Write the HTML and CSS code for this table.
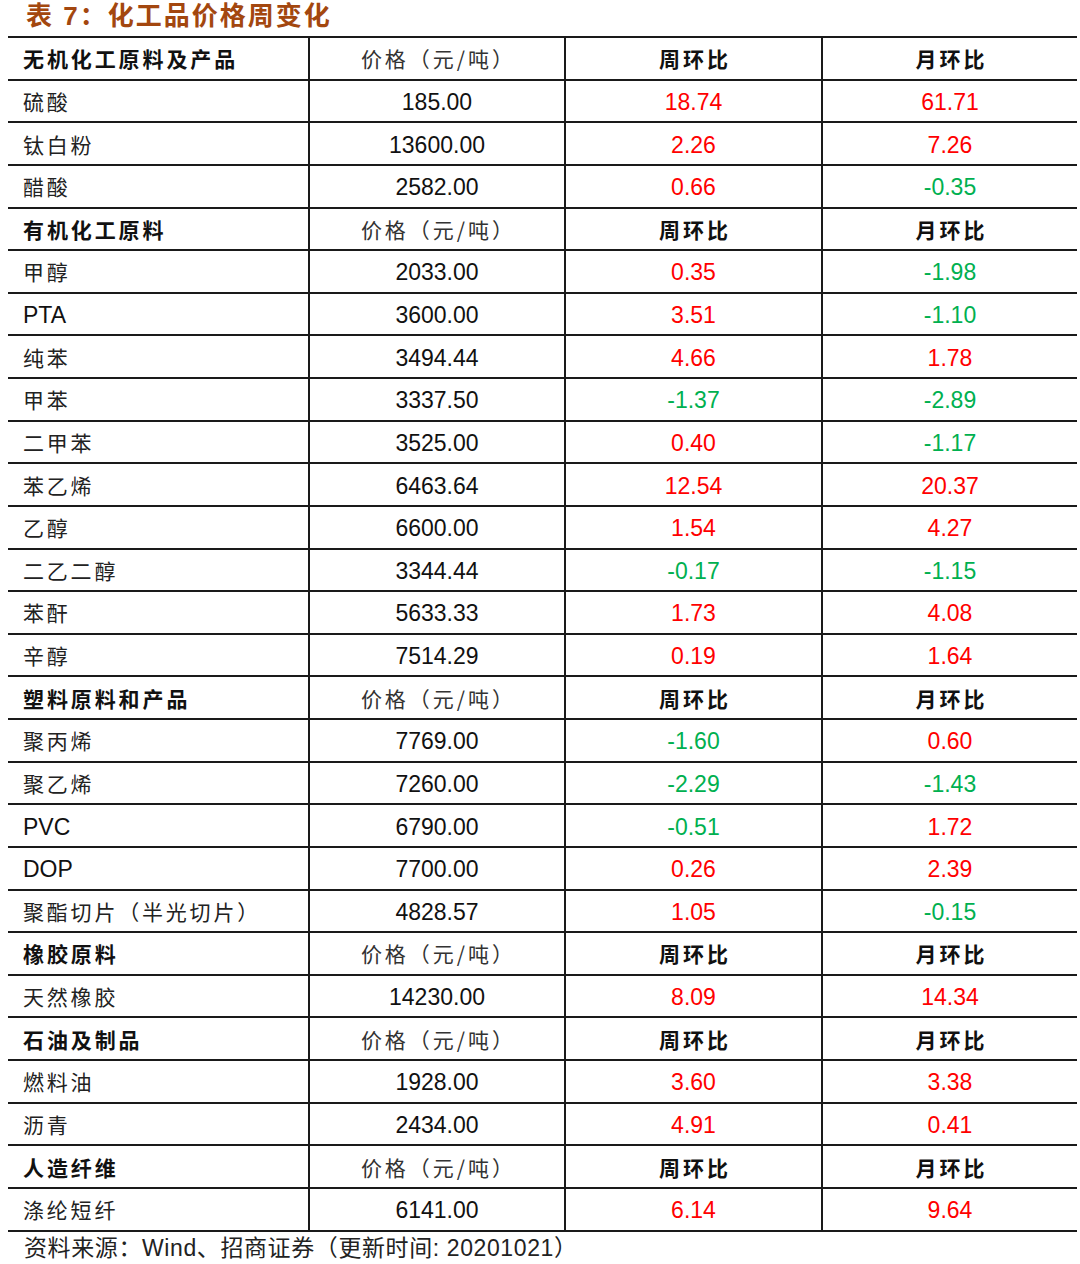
FILE: index.html
```html
<!DOCTYPE html>
<html lang="zh-CN">
<head>
<meta charset="utf-8">
<title>化工品价格周变化</title>
<link rel="stylesheet" href="styles.css">
</head>
<body>
<div class="page">
  <div class="title">表 7：化工品价格周变化</div>
  <div class="table">
    <div class="row head"><div class="c name">无机化工原料及产品</div><div class="c unit">价格（元/吨）</div><div class="c hd">周环比</div><div class="c hd">月环比</div></div>
    <div class="row"><div class="c name">硫酸</div><div class="c num">185.00</div><div class="c num up">18.74</div><div class="c num up">61.71</div></div>
    <div class="row"><div class="c name">钛白粉</div><div class="c num">13600.00</div><div class="c num up">2.26</div><div class="c num up">7.26</div></div>
    <div class="row"><div class="c name">醋酸</div><div class="c num">2582.00</div><div class="c num up">0.66</div><div class="c num dn">-0.35</div></div>
    <div class="row head"><div class="c name">有机化工原料</div><div class="c unit">价格（元/吨）</div><div class="c hd">周环比</div><div class="c hd">月环比</div></div>
    <div class="row"><div class="c name">甲醇</div><div class="c num">2033.00</div><div class="c num up">0.35</div><div class="c num dn">-1.98</div></div>
    <div class="row"><div class="c name lat">PTA</div><div class="c num">3600.00</div><div class="c num up">3.51</div><div class="c num dn">-1.10</div></div>
    <div class="row"><div class="c name">纯苯</div><div class="c num">3494.44</div><div class="c num up">4.66</div><div class="c num up">1.78</div></div>
    <div class="row"><div class="c name">甲苯</div><div class="c num">3337.50</div><div class="c num dn">-1.37</div><div class="c num dn">-2.89</div></div>
    <div class="row"><div class="c name">二甲苯</div><div class="c num">3525.00</div><div class="c num up">0.40</div><div class="c num dn">-1.17</div></div>
    <div class="row"><div class="c name">苯乙烯</div><div class="c num">6463.64</div><div class="c num up">12.54</div><div class="c num up">20.37</div></div>
    <div class="row"><div class="c name">乙醇</div><div class="c num">6600.00</div><div class="c num up">1.54</div><div class="c num up">4.27</div></div>
    <div class="row"><div class="c name">二乙二醇</div><div class="c num">3344.44</div><div class="c num dn">-0.17</div><div class="c num dn">-1.15</div></div>
    <div class="row"><div class="c name">苯酐</div><div class="c num">5633.33</div><div class="c num up">1.73</div><div class="c num up">4.08</div></div>
    <div class="row"><div class="c name">辛醇</div><div class="c num">7514.29</div><div class="c num up">0.19</div><div class="c num up">1.64</div></div>
    <div class="row head"><div class="c name">塑料原料和产品</div><div class="c unit">价格（元/吨）</div><div class="c hd">周环比</div><div class="c hd">月环比</div></div>
    <div class="row"><div class="c name">聚丙烯</div><div class="c num">7769.00</div><div class="c num dn">-1.60</div><div class="c num up">0.60</div></div>
    <div class="row"><div class="c name">聚乙烯</div><div class="c num">7260.00</div><div class="c num dn">-2.29</div><div class="c num dn">-1.43</div></div>
    <div class="row"><div class="c name lat">PVC</div><div class="c num">6790.00</div><div class="c num dn">-0.51</div><div class="c num up">1.72</div></div>
    <div class="row"><div class="c name lat">DOP</div><div class="c num">7700.00</div><div class="c num up">0.26</div><div class="c num up">2.39</div></div>
    <div class="row"><div class="c name">聚酯切片（半光切片）</div><div class="c num">4828.57</div><div class="c num up">1.05</div><div class="c num dn">-0.15</div></div>
    <div class="row head"><div class="c name">橡胶原料</div><div class="c unit">价格（元/吨）</div><div class="c hd">周环比</div><div class="c hd">月环比</div></div>
    <div class="row"><div class="c name">天然橡胶</div><div class="c num">14230.00</div><div class="c num up">8.09</div><div class="c num up">14.34</div></div>
    <div class="row head"><div class="c name">石油及制品</div><div class="c unit">价格（元/吨）</div><div class="c hd">周环比</div><div class="c hd">月环比</div></div>
    <div class="row"><div class="c name">燃料油</div><div class="c num">1928.00</div><div class="c num up">3.60</div><div class="c num up">3.38</div></div>
    <div class="row"><div class="c name">沥青</div><div class="c num">2434.00</div><div class="c num up">4.91</div><div class="c num up">0.41</div></div>
    <div class="row head"><div class="c name">人造纤维</div><div class="c unit">价格（元/吨）</div><div class="c hd">周环比</div><div class="c hd">月环比</div></div>
    <div class="row"><div class="c name">涤纶短纤</div><div class="c num">6141.00</div><div class="c num up">6.14</div><div class="c num up">9.64</div></div>
  </div>
  <div class="source">资料来源：Wind、招商证券（更新时间: 20201021）</div>
</div>
</body>
</html>
```

FILE: styles.css
```css
html, body {
  margin: 0;
  padding: 0;
  background: #ffffff;
}

.page {
  width: 1080px;
  height: 1264px;
  font-family: "Liberation Sans", "Noto Sans CJK SC", sans-serif;
  color: #111111;
}

.title {
  height: 36px;
  line-height: 32px;
  padding-left: 26px;
  font-family: "Liberation Sans", "Noto Sans CJK SC", sans-serif;
  font-size: 26px;
  font-weight: 700;
  color: #a3470f;
  letter-spacing: 2px;
}

.table {
  margin: 0 3px 0 8px;
  border-top: 2px solid #1a1a1a;
}

.row {
  display: grid;
  grid-template-columns: 300px 256px 257px 256px;
  height: 42.64px;
  box-sizing: border-box;
  border-bottom: 2px solid #1a1a1a;
}

.c {
  display: flex;
  align-items: center;
  justify-content: center;
  border-left: 2px solid #1a1a1a;
  box-sizing: border-box;
  white-space: nowrap;
}

.c.name {
  justify-content: flex-start;
  border-left: none;
  padding-left: 15px;
  font-family: "Noto Sans CJK SC", sans-serif;
  font-size: 21px;
  font-weight: 400;
  letter-spacing: 2.8px;
  color: #222222;
}

.c.name.lat {
  font-family: "Liberation Sans", sans-serif;
  font-size: 23px;
  letter-spacing: 0;
  color: #111111;
  padding-top: 3px;
}

.head .c.name {
  font-weight: 700;
  color: #111111;
  font-size: 21px;
  letter-spacing: 2.9px;
}

.c.unit {
  font-family: "Noto Sans CJK SC", sans-serif;
  font-size: 21px;
  color: #333333;
  letter-spacing: 3px;
  padding-left: 3px;
}

.c.hd {
  font-family: "Noto Sans CJK SC", sans-serif;
  font-size: 21px;
  font-weight: 700;
  letter-spacing: 3px;
  padding-left: 3px;
  color: #111111;
}

.c.num {
  font-family: "Liberation Sans", sans-serif;
  font-size: 23px;
  color: #111111;
  padding-top: 3px;
}

.c.num.up {
  color: #ff0000;
}

.c.num.dn {
  color: #00b050;
}

.source {
  height: 33px;
  line-height: 32px;
  padding-left: 24px;
  font-family: "Liberation Sans", "Noto Sans CJK SC", sans-serif;
  font-size: 23px;
  letter-spacing: 0.6px;
  color: #222222;
}
```
